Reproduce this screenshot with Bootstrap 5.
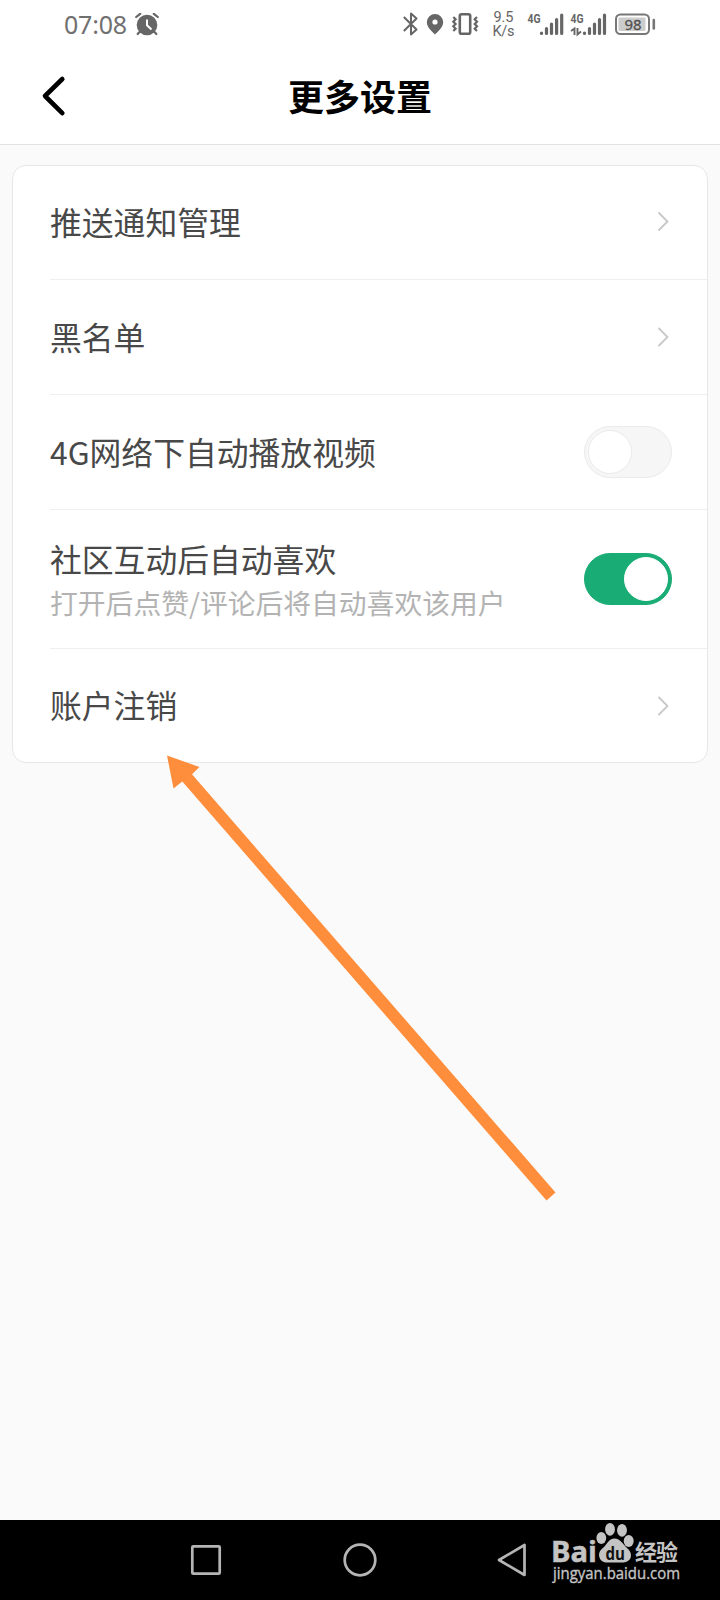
<!DOCTYPE html>
<html lang="zh-CN">
<head>
<meta charset="utf-8">
<meta name="viewport" content="width=device-width, initial-scale=1">
<title>更多设置</title>
<link href="https://cdn.jsdelivr.net/npm/bootstrap@5.3.0/dist/css/bootstrap.min.css" rel="stylesheet">
<style>
  body { background: #fafafa; font-family: "Noto Sans", "Noto Sans CJK SC", sans-serif; color: #484848; }
  .screen { width: 720px; height: 1600px; overflow: hidden; }
  .top-area { height: 145px; border-bottom: 1px solid #e2e2e2; }
  .status-bar { height: 50px; padding-left: 64px; padding-right: 60px; color: #707070; }
  .clock { font-size: 25px; line-height: 48px; margin-bottom: 2px; letter-spacing: -.2px; }
  .title-bar { height: 94px; padding: 0 40px; }
  .page-title { font: 700 36px/1 "Noto Sans CJK SC", sans-serif; color: #000; padding-bottom: 4px; }
  .side-slot { width: 28px; }
  .settings { margin: 20px 12px 0; border: 1px solid #e7e7e7; border-radius: 14px; background: #fff; }
  .setting { height: 115px; margin-left: 37px; padding-right: 35px; border-bottom: 1px solid #efefef; }
  .setting:first-child { height: 114px; }
  .setting.tall { height: 139px; }
  .setting:last-child { height: 113px; border-bottom: 0; }
  .label-main { font: 400 31.8px/36px "Noto Sans CJK SC", sans-serif; padding-bottom: 3px; }
  .label-sub { font: 400 27.8px/34px "Noto Sans CJK SC", sans-serif; color: #b3b3b3; margin-top: 6px; }
  .toggle { width: 88px; height: 52px; border-radius: 26px; background: #f6f6f6; border: 1px solid #ebebeb; padding: 3px; }
  .knob { width: 44px; height: 44px; border-radius: 50%; background: #fff; border: 1px solid #ebebeb; }
  .toggle.on { background: #1aac75; border-color: #1aac75; }
  .toggle.on .knob { border-color: #fff; }
  .chevron { margin-right: 3px; }
  .pointer { left: 160px; top: 750px; pointer-events: none; }
  .nav-keys { height: 80px; background: #000; }
</style>
</head>
<body>
<div class="screen position-relative d-flex flex-column">
  <header class="top-area bg-white flex-shrink-0">
    <div class="status-bar d-flex align-items-center justify-content-between">
      <div class="d-flex align-items-center">
        <span class="clock">07:08</span>
        <svg class="ms-2" width="24" height="24" viewBox="0 0 24 24" fill="none">
          <circle cx="12" cy="12" r="10.3" fill="#666"/>
          <path d="M1.2 4 5.2 .8M22.8 4 18.8 .8M4.500 19 2.700 21M19.500 19 21.300 21" stroke="#666" stroke-width="2.2" stroke-linecap="round"/>
          <path d="M12 6.500V12.300L16.500 16.500" stroke="#fff" stroke-width="2"/>
        </svg>
      </div>
      <svg width="260" height="50" viewBox="400 0 260 50" fill="none" font-family="Roboto, sans-serif">
        <path d="M403.800 17 416.500 29.500 411 34.500V13.500L416.500 18.500 403.800 31" stroke="#666" stroke-width="2" stroke-linejoin="round"/>
        <path d="M435 14a8.200 8.200 0 0 0-8.200 8.200c0 5 5 9 8.200 12.300 3.200-3.300 8.200-7.300 8.200-12.300A8.200 8.200 0 0 0 435 14Z" fill="#666"/>
        <circle cx="435" cy="22" r="2.600" fill="#fff"/>
        <rect x="459.800" y="14.200" width="10.400" height="19.600" rx="1.800" stroke="#666" stroke-width="2.600"/>
        <path d="M453.300 17 455.600 19.300 453.300 21.700 455.600 24 453.300 26.300 455.600 28.700 453.300 31M477 17 474.700 19.300 477 21.700 474.700 24 477 26.300 474.700 28.700 477 31" stroke="#666" stroke-width="2.200"/>
        <g fill="#666">
          <text x="493.500" y="22" font-size="14.500" textLength="20">9.5</text>
          <text x="492.500" y="35.800" font-size="14.500" textLength="22">K/s</text>
          <g font-size="12.500" font-weight="700">
            <text x="527.500" y="22.800" textLength="13" lengthAdjust="spacingAndGlyphs">4G</text>
            <text x="570.500" y="22.800" textLength="13" lengthAdjust="spacingAndGlyphs">4G</text>
          </g>
        </g>
        <g stroke="#666" stroke-width="3.200" stroke-linecap="round">
          <path d="M541.500 33V33.500M546.500 28.500V33.500M551.500 24V33.500M556.600 19.500V33.500M561.700 15V33.500"/>
          <path d="M584.500 33V33.500M589.500 28.500V33.500M594.500 24V33.500M599.500 19.500V33.500M604.500 15V33.500"/>
        </g>
        <path d="M571 31 574.500 28.500V35M577.500 28V34.500L581 31.500" stroke="#666" stroke-width="1.900"/>
        <rect x="616" y="14.500" width="33" height="19.500" rx="4.500" stroke="#777" stroke-width="2"/>
        <rect x="618.500" y="17.500" width="27" height="13.500" rx="1" fill="#ccc"/>
        <path d="M653.800 20V28.500" stroke="#777" stroke-width="2.600" stroke-linecap="round"/>
        <text x="624.500" y="29.500" font-size="15" font-family="Noto Sans" fill="#505050" stroke="#505050" stroke-width=".3" textLength="17">98</text>
      </svg>
    </div>
    <nav class="title-bar d-flex align-items-center justify-content-between">
      <svg class="side-slot" height="44" viewBox="0 0 28 44" fill="none"><path d="M22.300 4 5 21 22.300 38.200" stroke="#000" stroke-width="4.600" stroke-linecap="round" stroke-linejoin="round"/></svg>
      <h1 class="page-title m-0">更多设置</h1>
      <span class="side-slot"></span>
    </nav>
  </header>

  <main class="flex-grow-1">
    <div class="settings">
      <div class="setting d-flex align-items-center justify-content-between">
        <span class="label-main">推送通知管理</span>
        <svg class="chevron mb-1" width="12" height="20" viewBox="0 0 12 20" fill="none"><path d="M2 2 10.500 10.500 2 19" stroke="#c8c8c8" stroke-width="1.800" stroke-linecap="round"/></svg>
      </div>
      <div class="setting d-flex align-items-center justify-content-between">
        <span class="label-main">黑名单</span>
        <svg class="chevron" width="12" height="20" viewBox="0 0 12 20" fill="none"><path d="M2 1.500 10.500 10 2 18.500" stroke="#c8c8c8" stroke-width="1.800" stroke-linecap="round"/></svg>
      </div>
      <div class="setting d-flex align-items-center justify-content-between">
        <span class="label-main">4G网络下自动播放视频</span>
        <span class="toggle d-flex" role="switch" aria-checked="false"><span class="knob"></span></span>
      </div>
      <div class="setting tall d-flex align-items-center justify-content-between">
        <div>
          <div class="label-main">社区互动后自动喜欢</div>
          <div class="label-sub">打开后点赞/评论后将自动喜欢该用户</div>
        </div>
        <span class="toggle on d-flex justify-content-end" role="switch" aria-checked="true"><span class="knob"></span></span>
      </div>
      <div class="setting d-flex align-items-center justify-content-between">
        <span class="label-main">账户注销</span>
        <svg class="chevron" width="12" height="20" viewBox="0 0 12 20" fill="none"><path d="M2 1.500 10.500 10 2 18.500" stroke="#c8c8c8" stroke-width="1.800" stroke-linecap="round"/></svg>
      </div>
    </div>
  </main>

  <svg class="pointer position-absolute" width="400" height="460" viewBox="160 750 400 460">
    <path d="M167 755.500 199.500 767 192 774.300 555.500 1192.500 546.500 1200.500 182.300 781.500 173.500 788.500Z" fill="#ff8e3c"/>
  </svg>

  <footer class="nav-keys flex-shrink-0">
    <svg class="d-block" width="720" height="80" viewBox="0 1520 720 80" fill="none">
      <g stroke="#b5b5b5" stroke-width="2.700" stroke-linejoin="round">
        <rect x="192.300" y="1546.300" width="27.400" height="27.400" rx="1"/>
        <circle cx="360" cy="1560" r="15.300"/>
        <path d="M499 1560 524.500 1545V1575Z"/>
      </g>
      <g fill="#c4c4c4">
        <text x="551" y="1562" font-family="Open Sans" font-weight="700" font-size="28.500" textLength="46" lengthAdjust="spacingAndGlyphs" stroke="#c4c4c4" stroke-width=".5">Bai</text>
        <ellipse cx="601.300" cy="1538" rx="4.900" ry="6"/>
        <ellipse cx="610" cy="1529.300" rx="4.900" ry="6.400"/>
        <ellipse cx="622" cy="1530.300" rx="4.900" ry="6.400"/>
        <ellipse cx="628.700" cy="1541" rx="5" ry="6"/>
        <path d="M614.500 1538.500C608.500 1538.500 607.500 1544 603.500 1547.500 599 1551 598.500 1554 599.500 1557.500 601 1563 607 1562.800 614.500 1562.500 622 1562.800 629 1563 630.700 1557.500 631.700 1553.500 630 1550.500 626.500 1547.500 622.500 1544 620.500 1538.500 614.500 1538.500Z"/>
        <text x="635" y="1560" font-family="Noto Sans CJK SC" font-weight="700" font-size="22" textLength="43">经验</text>
        <text x="553" y="1579" font-family="Open Sans" font-weight="500" font-size="15.500" textLength="127" lengthAdjust="spacingAndGlyphs" stroke="#c4c4c4" stroke-width=".35">jingyan.baidu.com</text>
      </g>
      <text x="605.500" y="1559.500" fill="#111" font-family="Open Sans" font-weight="700" font-size="17" textLength="19.500" lengthAdjust="spacingAndGlyphs">du</text>
    </svg>
  </footer>
</div>
<script src="https://cdn.jsdelivr.net/npm/bootstrap@5.3.0/dist/js/bootstrap.bundle.min.js"></script>
</body>
</html>
